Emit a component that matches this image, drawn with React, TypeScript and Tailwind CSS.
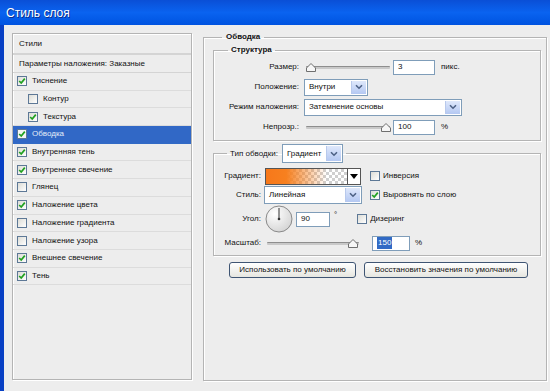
import React from "react";

function Check({ on, dark }: { on?: boolean; dark?: boolean }) {
  return (
    <span
      className={`flex h-[10px] w-[10px] shrink-0 items-center justify-center border border-[#5d7896] ${
        dark ? "bg-[#f4f4f4]" : "bg-gradient-to-br from-[#dcdcd6] to-white"
      }`}
    >
      {on && (
        <svg width="8" height="8" viewBox="0 0 8 8">
          <path d="M1.2 4 L3.2 6 L6.8 1.6" fill="none" stroke="#21a121" strokeWidth="1.7" />
        </svg>
      )}
    </span>
  );
}

function Arrow() {
  return (
    <span className="flex h-full w-[15px] shrink-0 items-center justify-center border-l border-[#b8c9ec] bg-gradient-to-b from-[#dfe8fb] to-[#b4c8f2]">
      <svg width="8" height="6" viewBox="0 0 8 6">
        <path d="M1 1.2 L4 4.2 L7 1.2" fill="none" stroke="#4d6185" strokeWidth="1.6" />
      </svg>
    </span>
  );
}

function Select({ value, w, h = "h-[17px]" }: { value: string; w: string; h?: string }) {
  return (
    <div className={`flex ${w} ${h} items-stretch border border-[#7f9db9] bg-white p-px`}>
      <span className="flex flex-1 items-center pl-[3px] text-[8px]">{value}</span>
      <Arrow />
    </div>
  );
}

function Field({ value, w, sel }: { value: string; w: string; sel?: boolean }) {
  return (
    <div className={`flex h-[15px] ${w} items-center border border-[#7f9db9] bg-white pl-[4px] text-[8px]`}>
      {sel ? <span className="bg-[#316ac5] px-px text-white">{value}</span> : value}
    </div>
  );
}

function Slider({ w, at }: { w: string; at: number }) {
  return (
    <div className={`relative flex h-[14px] ${w} items-center`}>
      <div className="h-[3px] w-full rounded-[1px] border-t border-[#8e8e8e] bg-[#c9c9c9]" />
      <svg
        className="absolute top-[3px]"
        style={{ left: `calc(${at}% - 5px)` }}
        width="10"
        height="9"
        viewBox="0 0 10 9"
      >
        <path d="M5 0.5 L9.5 5 L9.5 8.5 L0.5 8.5 L0.5 5 Z" fill="#f6f6f6" stroke="#6f6f6f" />
      </svg>
    </div>
  );
}

const items: { label: string; on: boolean; indent?: boolean; active?: boolean }[] = [
  { label: "Тиснение", on: true },
  { label: "Контур", on: false, indent: true },
  { label: "Текстура", on: true, indent: true },
  { label: "Обводка", on: true, active: true },
  { label: "Внутренняя тень", on: true },
  { label: "Внутреннее свечение", on: true },
  { label: "Глянец", on: false },
  { label: "Наложение цвета", on: true },
  { label: "Наложение градиента", on: false },
  { label: "Наложение узора", on: false },
  { label: "Внешнее свечение", on: true },
  { label: "Тень", on: true },
];

const group =
  "border border-[#b4b4b4] shadow-[inset_1px_1px_0_#fff,1px_1px_0_#fff]";

export default function App() {
  return (
    <div className="h-[391px] w-[550px] overflow-hidden bg-[#ededed] font-['Liberation_Sans',Arial,sans-serif] text-[#111]">
      {/* Title bar */}
      <div className="flex h-[25px] items-center bg-gradient-to-b from-[#0a4fd6] via-[#0a63f0] to-[#0053e0] pl-[6px] text-[12px] text-white [text-shadow:1px_1px_0_#0a2d8a]">
        Стиль слоя
      </div>

      <div className="flex h-[366px] border-l-4 border-[#0840c4] pl-[8px]">
        {/* Styles list */}
        <div className={`mt-[8px] flex h-[347px] w-[180px] flex-col ${group} text-[8px]`}>
          <div className="flex h-[21px] items-center border-b-2 border-[#d4d4d4] pl-[6px]">Стили</div>
          <div className="flex h-[18px] items-center border-b border-[#d4d4d4] pl-[6px]">
            Параметры наложения: Заказные
          </div>
          {items.map((it) => (
            <div
              key={it.label}
              className={`flex h-[17.7px] items-center gap-[5px] border-b ${
                it.active
                  ? "border-[#316ac5] bg-[#3168c6] text-[#e4ecf8]"
                  : "border-[#dcdcdc]"
              } ${it.indent ? "pl-[15px]" : "pl-[4px]"}`}
            >
              <Check on={it.on} dark={it.active} />
              <span>{it.label}</span>
            </div>
          ))}
        </div>

        {/* Stroke group */}
        <fieldset className={`ml-[11px] mt-[7px] h-[349px] w-[344px] pl-[9px] pr-[5px] ${group}`}>
          <legend className="ml-[9px] px-[4px] text-[8px] font-bold leading-[10px]">Обводка</legend>

          <fieldset className={`mt-[3px] w-[328px] pb-[3px] pt-[2px] ${group}`}>
            <legend className="ml-[14px] px-[3px] text-[8px] font-bold leading-[10px]">Структура</legend>
            <div className="flex h-[20px] items-center">
              <span className="w-[86px] pr-[1px] text-right text-[8px]">Размер:</span>
              <span className="ml-[6px] flex items-center gap-[3px]">
                <Slider w="w-[84px]" at={6} />
                <Field value="3" w="w-[42px]" />
                <span className="ml-[3px] text-[8px]">пикс.</span>
              </span>
            </div>
            <div className="flex h-[20px] items-center">
              <span className="w-[86px] pr-[1px] text-right text-[8px]">Положение:</span>
              <span className="ml-[4px]">
                <Select value="Внутри" w="w-[64px]" />
              </span>
            </div>
            <div className="flex h-[20px] items-center">
              <span className="w-[86px] pr-[1px] text-right text-[8px]">Режим наложения:</span>
              <span className="ml-[4px]">
                <Select value="Затемнение основы" w="w-[158px]" />
              </span>
            </div>
            <div className="flex h-[20px] items-center">
              <span className="w-[86px] pr-[1px] text-right text-[8px]">Непрозр.:</span>
              <span className="ml-[6px] flex items-center gap-[3px]">
                <Slider w="w-[84px]" at={95} />
                <Field value="100" w="w-[42px]" />
                <span className="ml-[3px] text-[8px]">%</span>
              </span>
            </div>
          </fieldset>

          <fieldset className={`mt-[3px] w-[328px] pb-[3px] pt-[4px] ${group}`}>
            <legend className="ml-[13px] flex items-center gap-[4px] px-[3px] text-[8px]">
              <span>Тип обводки:</span>
              <Select value="Градиент" w="w-[61px]" h="h-[19px]" />
            </legend>

            <div className="flex h-[18px] items-center">
              <span className="w-[47px] text-right text-[8px]">Градиент:</span>
              <div className="ml-[4px] flex h-[17px] w-[96px] border border-[#555]">
                <div className="flex-1 [background-image:linear-gradient(to_right,#f7781a_0%,#f7801f_25%,rgba(247,128,31,0)_75%),repeating-conic-gradient(#cfcfcf_0_25%,#ffffff_0_50%)] [background-size:100%_100%,6px_6px]" />
                <div className="flex w-[13px] items-center justify-center border-l border-[#555] bg-white">
                  <svg width="8" height="5" viewBox="0 0 8 5">
                    <path d="M0 0 L8 0 L4 5 Z" fill="#000" />
                  </svg>
                </div>
              </div>
              <span className="ml-[9px] flex items-center gap-[3px] text-[8px]">
                <Check />
                Инверсия
              </span>
            </div>

            <div className="flex h-[19px] items-center">
              <span className="w-[47px] text-right text-[8px]">Стиль:</span>
              <span className="ml-[3px]">
                <Select value="Линейная" w="w-[98px]" h="h-[18px]" />
              </span>
              <span className="ml-[8px] flex items-center gap-[3px] text-[8px]">
                <Check on />
                Выровнять по слою
              </span>
            </div>

            <div className="flex h-[30px] items-center">
              <span className="w-[47px] text-right text-[8px]">Угол:</span>
              <svg className="ml-[4px]" width="28" height="28" viewBox="0 0 28 28">
                <defs>
                  <radialGradient id="dial" cx="35%" cy="30%" r="75%">
                    <stop offset="0%" stopColor="#ffffff" />
                    <stop offset="100%" stopColor="#d4d4d4" />
                  </radialGradient>
                </defs>
                <circle cx="14" cy="14" r="13" fill="url(#dial)" stroke="#8a8a8a" />
                <line x1="14" y1="14" x2="14" y2="3" stroke="#333" strokeWidth="1" />
                <circle cx="14" cy="14" r="1.3" fill="#333" />
              </svg>
              <span className="ml-[3px]">
                <Field value="90" w="w-[34px]" />
              </span>
              <span className="ml-[4px] self-start pt-[5px] text-[8px]">°</span>
              <span className="ml-[20px] flex items-center gap-[3px] text-[8px]">
                <Check />
                Дизеринг
              </span>
            </div>

            <div className="flex h-[18px] items-center">
              <span className="w-[47px] text-right text-[8px]">Масштаб:</span>
              <span className="ml-[6px]">
                <Slider w="w-[92px]" at={94} />
              </span>
              <span className="ml-[13px]">
                <Field value="150" w="w-[38px]" sel />
              </span>
              <span className="ml-[5px] text-[8px]">%</span>
            </div>
          </fieldset>

          <div className="mt-[6px] flex justify-center gap-[8px] pl-[3px]">
            <button className="flex h-[16px] w-[127px] items-center justify-center whitespace-nowrap rounded-[3px] border border-[#3f5573] bg-gradient-to-b from-white to-[#e6e6e0] text-[8px] text-[#111]">
              Использовать по умолчанию
            </button>
            <button className="flex h-[16px] w-[164px] items-center justify-center whitespace-nowrap rounded-[3px] border border-[#3f5573] bg-gradient-to-b from-white to-[#e6e6e0] text-[8px] text-[#111]">
              Восстановить значения по умолчанию
            </button>
          </div>
        </fieldset>
      </div>
    </div>
  );
}
